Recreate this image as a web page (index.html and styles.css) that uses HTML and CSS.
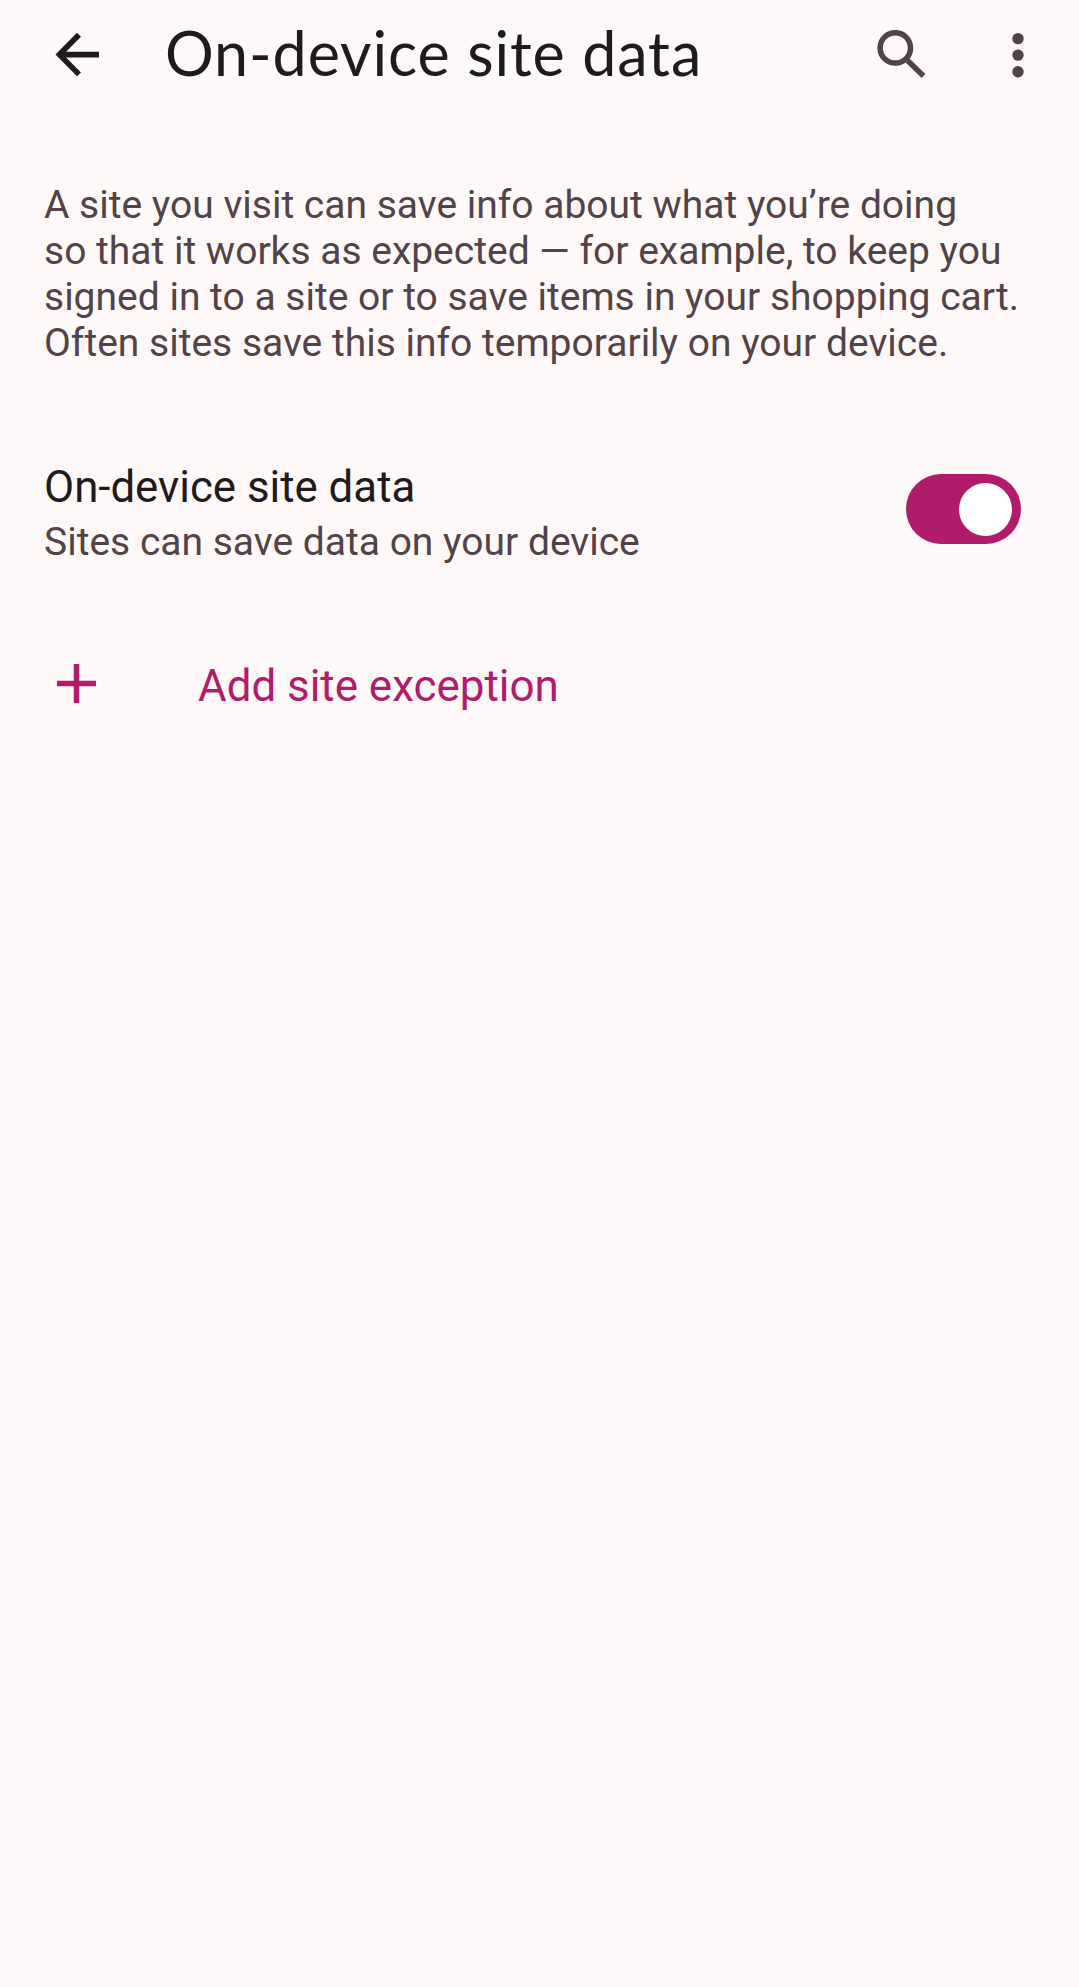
FILE: index.html
```html
<!DOCTYPE html>
<html lang="en">
<head>
<meta charset="utf-8">
<title>On-device site data</title>
<link rel="stylesheet" href="styles.css">
</head>
<body>
<header class="toolbar">
  <svg class="back" viewBox="0 0 45 45"><path d="M24 2.800 4.400 22.600 24 42.400M5 22.600H44" fill="none" stroke="currentColor" stroke-width="5.600"/></svg>
  <h1 class="title">On-device site data</h1>
  <svg class="search" viewBox="0 0 49 49"><g fill="none" stroke="currentColor" stroke-width="5.500"><circle cx="18.300" cy="17.900" r="15.200"/><path d="M30.500 30.500 46.500 46"/></g></svg>
  <svg class="more" viewBox="0 0 12 46"><g fill="currentColor"><circle cx="6" cy="6.600" r="5.700"/><circle cx="6" cy="23.100" r="5.700"/><circle cx="6" cy="39.700" r="5.700"/></g></svg>
</header>
<main>
  <p class="intro">A site you visit can save info about what you’re doing<br>so that it works as expected — for example, to keep you<br>signed in to a site or to save items in your shopping cart.<br>Often sites save this info temporarily on your device.</p>
  <section class="setting">
    <div>
      <div class="name">On-device site data</div>
      <div class="summary">Sites can save data on your device</div>
    </div>
    <div class="switch"><div class="thumb"></div></div>
  </section>
  <div class="add">
    <svg class="plus" viewBox="0 0 39 39"><path d="M19.500 0V39M0 19.500H39" stroke="currentColor" stroke-width="5.500"/></svg>
    <span>Add site exception</span>
  </div>
</main>
</body>
</html>
```
FILE: styles.css
```css
body { margin: 0; background: #fff8f8; font-family: Roboto, sans-serif; color: #201a1c; }
svg { display: block; flex: none; }
.toolbar { display: flex; align-items: center; height: 109px; padding: 0 55px; box-sizing: border-box; }
.back { width: 45px; height: 45px; }
.title { margin: 0 0 4px 65px; width: 712px; font: 400 61px/76px "Google Sans", Lato, sans-serif; letter-spacing: 0.9px; white-space: nowrap; }
.search { width: 49px; height: 49px; color: #514347; }
.more { width: 12px; height: 46px; margin-left: 86px; color: #514347; }
.intro { margin: 73px 0 0 44px; font-size: 39px; line-height: 46px; color: #514347; white-space: nowrap; }
.setting { display: flex; justify-content: space-between; align-items: flex-start; margin: 94px 58px 0 44px; }
.name { font-size: 43.8px; line-height: 54px; }
.summary { font-size: 39px; line-height: 57px; color: #514347; }
.switch { display: flex; justify-content: flex-end; align-items: center; width: 115px; height: 70px; margin-top: 14px; padding-right: 9px; box-sizing: border-box; border-radius: 35px; background: #b01b6a; }
.thumb { width: 53px; height: 53px; border-radius: 50%; background: #fff; }
.add { display: flex; align-items: center; margin: 85px 0 0 57px; color: #b01b6a; font-size: 43.9px; line-height: 60px; }
.plus { width: 39px; height: 39px; margin: 0 102px 6px 0; }
```
